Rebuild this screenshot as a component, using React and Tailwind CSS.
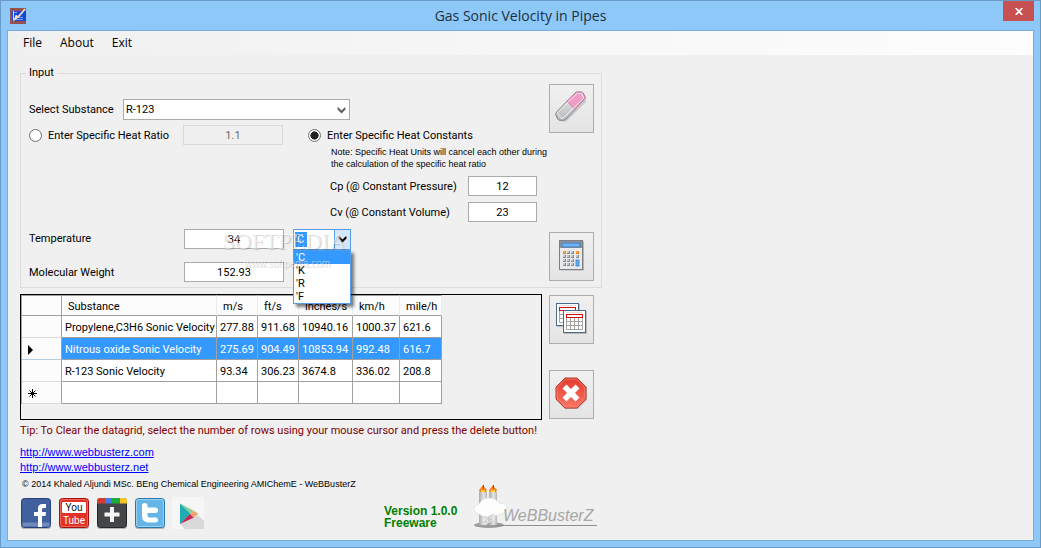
import { useState } from 'react';
import clsx from 'clsx';

const UNITS = ["'C", "'K", "'R", "'F"];
const COLUMNS = ['Substance', 'm/s', 'ft/s', 'inches/s', 'km/h', 'mile/h'];
const ROWS = [
  ['Propylene,C3H6 Sonic Velocity', '277.88', '911.68', '10940.16', '1000.37', '621.6'],
  ['Nitrous oxide Sonic Velocity', '275.69', '904.49', '10853.94', '992.48', '616.7'],
  ['R-123 Sonic Velocity', '93.34', '306.23', '3674.8', '336.02', '208.8'],
];

function AppIcon() {
  return (
    <svg width="16" height="16" viewBox="0 0 16 16" aria-hidden="true">
      <rect width="16" height="16" fill="#95504f" />
      <rect x="2" y="3" width="14" height="10" fill="#1746d8" />
      <path d="M3 4h4v1H3zM4 11h9v1H4zM7 9h6v1H7z" fill="#7fa2f2" />
      <path d="M3.500 3v9.500" stroke="#e9dfe9" strokeWidth="1" />
      <path d="M15 1 9 8l-4 3 1.500-4" fill="none" stroke="#f3dcc0" strokeWidth="1.800" />
    </svg>
  );
}

function Chevron({ className }) {
  return (
    <svg width="9" height="7" viewBox="0 0 9 7" className={className} aria-hidden="true">
      <path d="M0.500 0.500v2l4 4 4-4v-2l-1 0-3 3-3-3z" fill="currentColor" />
    </svg>
  );
}

function EraserIcon() {
  return (
    <svg width="32" height="32" viewBox="0 0 32 32" aria-hidden="true">
      <defs>
        <linearGradient id="eraserGray" x1="0" y1="0" x2="0" y2="1">
          <stop offset="0" stopColor="#eceeef" />
          <stop offset="1" stopColor="#b6b9bb" />
        </linearGradient>
      </defs>
      <path d="M5 30.500h6L31 11V8L10 29z" fill="#000" opacity=".15" />
      <path d="M20 2q1-1 2.500-1h4q1 0 1.600 1l2 3.500q.6 1.500-.5 2.600L11 28q-1.200 1.300-2.800 1.300H5q-1.500 0-2.200-1.200L1 24.500Q.2 22.500 1.600 21z" fill="url(#eraserGray)" stroke="#7e8284" />
      <path d="m11.700 10.200 8.600-8q.9-.9 2.300-.9h3.700q.9 0 1.400.9l1.900 3.300q.5 1.300-.4 2.200L20 18.200z" fill="#ee9ec4" stroke="#c9769f" strokeWidth=".8" />
      <path d="M2.300 21.800 21 3.300q1-1 2-1h4" fill="none" stroke="#fff" opacity=".65" />
      <path d="M2.300 22 7 28 28.600 7.500 27 2.500" fill="none" stroke="#fff" opacity=".8" strokeWidth=".9" />
    </svg>
  );
}

function CalculatorIcon() {
  const keys = [];
  for (let r = 0; r < 4; r++) {
    for (let c = 0; c < 4; c++) {
      if (c === 3 && r > 1) continue;
      keys.push({ x: 8 + c * 4 + (c === 3 ? 1 : 0), y: 12 + r * 4, orange: r === 0 && (c === 0 || c === 3) });
    }
  }
  return (
    <svg width="32" height="32" viewBox="0 0 32 32" aria-hidden="true">
      <rect x="5" y="2" width="24" height="29.500" rx="1" fill="#000" opacity=".22" />
      <rect x="4.500" y="1.500" width="23" height="29" fill="#e8eaec" stroke="#7b7f83" />
      <rect x="5" y="2" width="22" height="7" fill="#8b9299" />
      <rect x="7" y="4" width="18" height="4" fill="#6cb1f3" stroke="#3f76b3" strokeWidth=".8" />
      {keys.map(k => (
        <g key={`${k.x}-${k.y}`}>
          <rect x={k.x} y={k.y} width="3" height="3" fill={k.orange ? '#f58220' : '#85898c'} />
          <rect x={k.x} y={k.y} width="2" height="2" fill={k.orange ? '#fb9b45' : '#c6c9cb'} />
        </g>
      ))}
      <rect x="21" y="21" width="3" height="6" fill="#62aaf0" stroke="#4a90d9" />
    </svg>
  );
}

function Sheet({ x, y }) {
  return (
    <g transform={`translate(${x} ${y})`}>
      <rect x="1" y="1" width="23" height="23" fill="#000" opacity=".2" />
      <rect x=".5" y=".5" width="22" height="22" fill="#fff" stroke="#496a8d" />
      <path d="M3 2.500h17" stroke="#dfe3e6" />
      <path d="M3.500 8v11.500h16V8M7.500 8v11.500M11.500 8v11.500M15.500 8v11.500M3.500 11.500h16M3.500 15.500h16" fill="none" stroke="#a3a3a3" />
      <rect x="3.500" y="4.500" width="16" height="3" fill="#fff" stroke="#cf1010" />
    </g>
  );
}

function SheetsIcon() {
  return (
    <svg width="32" height="32" viewBox="0 0 32 32" aria-hidden="true">
      <Sheet x={1} y={1} />
      <Sheet x={8} y={8} />
    </svg>
  );
}

function CloseIcon() {
  return (
    <svg width="32" height="32" viewBox="0 0 32 32" aria-hidden="true">
      <defs>
        <linearGradient id="stopRed" x1="0" y1="0" x2="0" y2="1">
          <stop offset="0" stopColor="#e23a2e" />
          <stop offset="1" stopColor="#fb7565" />
        </linearGradient>
      </defs>
      <path d="M10 2h13l9 9v12l-9 9H10l-9-9V11z" fill="#000" opacity=".2" />
      <path d="M10 1h12l9 9v12l-9 9H10l-9-9V10z" fill="url(#stopRed)" stroke="#b8392c" />
      <path d="M10.400 2.200h11.200l8.200 8.200v11.200l-8.200 8.200H10.400l-8.200-8.200V10.400z" fill="none" stroke="#f58b7e" strokeWidth=".7" />
      <path d="m9.500 9.500 13 13m0-13-13 13" stroke="#fff" strokeWidth="5.500" />
    </svg>
  );
}

function FacebookIcon() {
  return (
    <svg width="32" height="32" viewBox="0 0 32 32" aria-hidden="true">
      <rect x="1" y="2" width="30" height="30" rx="3" fill="#000" opacity=".25" />
      <rect x="1.500" y="1.500" width="29" height="29" rx="3" fill="#41609e" stroke="#24427c" />
      <path d="M2.500 25.500h27v3q0 1-1 1h-25q-1 0-1-1z" fill="#7089ba" />
      <path d="M18 30V19h-4v-4h4v-3.500Q18 7 22.500 7H26v4h-2.500q-1.500 0-1.500 1.500V15h4l-.5 4H22v11z" fill="#fff" />
    </svg>
  );
}

function YouTubeIcon() {
  return (
    <svg width="32" height="32" viewBox="0 0 32 32" aria-hidden="true">
      <rect x="1" y="2" width="30" height="30" rx="3" fill="#000" opacity=".25" />
      <rect x="1.500" y="1.500" width="29" height="29" rx="3" fill="#e23326" stroke="#a3100e" />
      <rect x="2.500" y="2.500" width="27" height="27" rx="2" fill="none" stroke="#f27466" strokeWidth=".8" />
      <rect x="4" y="5" width="24" height="11" rx="1" fill="#fff" />
      <text x="16" y="14" textAnchor="middle" fontSize="10" fill="#111" fontFamily="Roboto, sans-serif">You</text>
      <text x="16" y="27" textAnchor="middle" fontSize="10" fill="#fff" fontFamily="Roboto, sans-serif">Tube</text>
    </svg>
  );
}

function PlusIcon() {
  return (
    <svg width="32" height="32" viewBox="0 0 32 32" aria-hidden="true">
      <rect x="1" y="2" width="30" height="30" rx="3" fill="#000" opacity=".25" />
      <rect x="1.500" y="1.500" width="29" height="29" rx="3" fill="#454648" stroke="#262728" />
      <path d="M4 1h5v5.500H1V4q0-3 3-3z" fill="#d63a2e" />
      <path d="M9 1h7v5.500H9z" fill="#3f7de8" />
      <path d="M16 1h8v5.500h-8z" fill="#1faa3c" />
      <path d="M24 1h4q3 0 3 3v2.500h-7z" fill="#f7c325" />
      <path d="M14 10h4v5.500h5.500v4H18V25h-4v-5.500H8.500v-4H14z" fill="#f4f4f4" />
    </svg>
  );
}

function TwitterIcon() {
  return (
    <svg width="32" height="32" viewBox="0 0 32 32" aria-hidden="true">
      <rect x="1" y="2" width="30" height="30" rx="3" fill="#000" opacity=".25" />
      <rect x="1.500" y="1.500" width="29" height="29" rx="3" fill="#67b5e6" stroke="#2577ad" />
      <rect x="2.500" y="2.500" width="27" height="27" rx="2" fill="none" stroke="#a7d8f5" strokeWidth=".8" />
      <path d="M8 8.500Q8 6 10.700 6t2.800 2.500V10.500h8q2.500 0 2.500 2.700t-2.500 2.800h-8v2.500q0 2 2 2h6q2.500 0 2.500 2.500t-2.500 2.500H15q-7 0-7-7z" fill="#fff" />
    </svg>
  );
}

function PlayIcon() {
  return (
    <svg width="32" height="32" viewBox="0 0 32 32" aria-hidden="true">
      <rect width="32" height="32" fill="#f6f6f6" />
      <path d="m8 27 18-9 6 6v8H13z" fill="#d9d9d9" />
      <path d="m8 6.500 13.500 7L18 17z" fill="#8ccf9f" />
      <path d="M8 6.500v20.500L18.500 17z" fill="#20aab2" />
      <path d="m8 27 10-10 4 3.500z" fill="#c9244e" />
      <path d="m21.500 13.500 5 3.500-5 3.500-3.500-3.500z" fill="#f3a66c" />
    </svg>
  );
}

function WebbusterzLogo() {
  return (
    <svg width="124" height="46" viewBox="0 0 124 46" role="img" aria-label="WeBBusterZ">
      <defs>
        <linearGradient id="chimney" x1="0" x2="1">
          <stop offset="0" stopColor="#aaaaaa" />
          <stop offset=".6" stopColor="#e6e6e6" />
          <stop offset="1" stopColor="#b4b4b4" />
        </linearGradient>
      </defs>
      <ellipse cx="15" cy="42" rx="15" ry="3" fill="#9c9c9c" />
      <path d="M20 42.500h103" stroke="#8f8f8f" />
      <path d="M5 9h8v33H5z" fill="url(#chimney)" />
      <path d="M15 9h8v33h-8z" fill="url(#chimney)" />
      <path d="M6 9q-2-2 .5-3.500L9 2l2 3q3 1 1 4z" fill="#f47b20" />
      <path d="M16 9q-2-2 .5-3.500L19 2l2 3q3 1 1 4z" fill="#f47b20" />
      <path d="M7 9V6.500l2 1 2-1V9zM17 9V6.500l2 1 2-1V9z" fill="#ffd93d" />
      <path d="M9.500 2v3.500M19.500 2v3.500" stroke="#c43a1c" />
      <path d="M5 31q-5-1-5-5t6-6q2-5 9-5t10 5q8 0 8 5t-7 6q-3 3-8 1-7 4-13-1z" fill="#fdfdfd" stroke="#d6d6d6" strokeWidth=".6" />
      <path d="m18 31-9 6h5l-3 5 10-7h-5l5-4z" fill="#c9c9c9" stroke="#f6f6f6" strokeWidth=".8" />
      <text x="29" y="38" fontSize="16" fill="#a6a6a6" fontFamily="Liberation Sans, sans-serif" fontStyle="italic">WeBBusterZ</text>
    </svg>
  );
}

function ToolButton({ label, children }) {
  return (
    <button type="button" aria-label={label} className="flex h-[49px] w-[45px] shrink-0 items-center justify-center border border-[#adadad] bg-linear-to-b from-[#f0f0f0] to-[#e4e4e4] pr-px pb-1">
      {children}
    </button>
  );
}

function Radio({ checked, onChange, children }) {
  return (
    <label className="flex items-center gap-[6px]">
      <input type="radio" name="heatMode" checked={checked} onChange={onChange}
        className="size-[13px] appearance-none rounded-full border border-[#707070] bg-white checked:bg-radial checked:from-[#222222] checked:from-50% checked:to-white checked:to-55%" />
      <span>{children}</span>
    </label>
  );
}

const FIELD = 'h-5 border border-[#ababab] bg-white px-1 text-center outline-none';

function HeatInputs() {
  const [mode, setMode] = useState('constants');
  return (
    <>
      <div className="mt-[5px] flex h-5 items-center">
        <div className="w-[154px]">
          <Radio checked={mode === 'ratio'} onChange={() => setMode('ratio')}>Enter Specific Heat Ratio</Radio>
        </div>
        <input aria-label="Specific heat ratio" defaultValue="1.1" disabled={mode !== 'ratio'}
          className="mr-[25px] h-5 w-[100px] border border-[#d9d9d9] bg-[#f0f0f0] text-center text-[#6d6d6d]" />
        <Radio checked={mode === 'constants'} onChange={() => setMode('constants')}>Enter Specific Heat Constants</Radio>
      </div>
      <p className="mt-px pl-[302px] font-['Liberation_Sans',Arial,sans-serif] text-[9px] leading-3 whitespace-nowrap">
        Note: Specific Heat Units will cancel each other during<br />
        the calculation of the specific heat ratio
      </p>
      <div className="mt-[6px] flex items-center pl-[301px]">
        <label htmlFor="cp" className="w-[138px]">Cp (@ Constant Pressure)</label>
        <input id="cp" defaultValue="12" className={clsx(FIELD, 'w-[69px]')} />
      </div>
      <div className="mt-[6px] flex items-center pl-[301px]">
        <label htmlFor="cv" className="w-[138px]">Cv (@ Constant Volume)</label>
        <input id="cv" defaultValue="23" className={clsx(FIELD, 'w-[69px]')} />
      </div>
    </>
  );
}

function UnitCombo() {
  const [unit, setUnit] = useState("'C");
  const [open, setOpen] = useState(true);
  return (
    <div className="relative ml-[9px] flex h-[21px] w-[58px] border border-[#569de5] bg-white">
      <div className="flex flex-1 items-center pl-px">
        <input aria-label="Temperature unit" role="combobox" aria-expanded={open} aria-controls="unit-list" value={unit} readOnly
          className="h-[15px] w-3 bg-[#3399ff] text-white outline-none" />
      </div>
      <button type="button" aria-label="Show units" onClick={() => setOpen(!open)}
        className="flex w-4 items-center justify-center border-l border-[#569de5] bg-[#d3e7fb] text-black">
        <Chevron />
      </button>
      {open && (
        <ul id="unit-list" role="listbox" className="absolute top-5 -left-px z-10 w-[58px] border border-[#569de5] bg-white shadow-[3px_3px_3px_rgba(0,0,0,0.5)]">
          {UNITS.map(u => (
            <li key={u} role="option" aria-selected={u === unit} onClick={() => { setUnit(u); setOpen(false); }}
              className={clsx('h-[13px] pl-[2px] leading-[13px]', u === unit && 'bg-[#3399ff] text-white')}>
              {u}
            </li>
          ))}
        </ul>
      )}
      <div aria-hidden="true" className="pointer-events-none absolute top-0 -left-[72px] z-20 text-white/50 [text-shadow:1px_1px_1px_rgba(0,0,0,0.18)]">
        <p className="font-['Liberation_Serif',serif] text-[23px] leading-6">SOFTPEDIA</p>
        <p className="pl-[22px] font-['Liberation_Sans',Arial,sans-serif] text-[10px] leading-5">www.softpedia.com</p>
      </div>
    </div>
  );
}

function InputGroup() {
  return (
    <fieldset className="flex border border-[#dcdcdc] pr-[7px] pb-[5px] pl-[5px]">
      <legend className="px-[3px] leading-[14px]">Input</legend>
      <div className="flex-1 pl-[3px]">
        <div className="mt-[19px] flex items-center">
          <label htmlFor="substance" className="w-[94px]">Select Substance</label>
          <div className="relative">
            <select id="substance" className="h-[21px] w-[227px] appearance-none border border-[#ababab] bg-white px-[2px] outline-none">
              <option>R-123</option>
              <option>Nitrous oxide</option>
              <option>Propylene,C3H6</option>
            </select>
            <Chevron className="pointer-events-none absolute top-2 right-1 text-[#606060]" />
          </div>
        </div>
        <HeatInputs />
        <div className="mt-[7px] flex items-start">
          <label htmlFor="temperature" className="w-[155px] leading-5">Temperature</label>
          <input id="temperature" defaultValue="34" className={clsx(FIELD, 'w-[100px]')} />
          <UnitCombo />
        </div>
        <div className="mt-3 flex items-center">
          <label htmlFor="weight" className="w-[155px]">Molecular Weight</label>
          <input id="weight" defaultValue="152.93" className={clsx(FIELD, 'w-[100px]')} />
        </div>
      </div>
      <div className="flex flex-col justify-between pt-1 pb-px">
        <ToolButton label="Clear"><EraserIcon /></ToolButton>
        <ToolButton label="Calculate"><CalculatorIcon /></ToolButton>
      </div>
    </fieldset>
  );
}

function RowHeader({ selected, children }) {
  return (
    <th scope="row" className={clsx('border-r border-b border-r-[#a0a0a0] bg-[#fcfcfc] pt-[2px] pl-[6px]', selected ? 'border-b-[#b5cde3]' : 'border-b-[#dcdcdc]')}>
      {children}
    </th>
  );
}

function ResultGrid() {
  const [selected, setSelected] = useState(1);
  return (
    <div className="flex-1 border border-black pb-[15px]">
      <table className="w-[421px] table-fixed border-separate border-spacing-0 border-l border-[#a0a0a0] text-left">
        <colgroup>
          <col className="w-[40px]" />
          <col className="w-[155px]" />
          <col className="w-[41px]" />
          <col className="w-[41px]" />
          <col className="w-[54px]" />
          <col className="w-[47px]" />
          <col className="w-[42px]" />
        </colgroup>
        <thead>
          <tr className="h-[21px] bg-[#fcfcfc]">
            <td className="border-t border-r border-b border-[#a0a0a0]" />
            {COLUMNS.map(c => (
              <th key={c} scope="col" className="border-t border-r border-b border-[#a0a0a0] border-r-[#e5edf5] pt-[2px] pl-[6px] font-normal">{c}</th>
            ))}
          </tr>
        </thead>
        <tbody>
          {ROWS.map((row, i) => (
            <tr key={row[0]} onClick={() => setSelected(i)} className={clsx('h-[22px]', i === selected ? 'bg-[#3399ff] text-white' : 'bg-white')}>
              <RowHeader selected={i === selected}>
                {i === selected && (
                  <svg width="6" height="10" viewBox="0 0 6 10" role="img" aria-label="Current row">
                    <path d="M0 0v10l5-5z" fill="#000" />
                  </svg>
                )}
              </RowHeader>
              {row.map((cell, j) => (
                <td key={j} className="border-r border-b border-[#a0a0a0] pt-[2px] pl-[3px] whitespace-nowrap">{cell}</td>
              ))}
            </tr>
          ))}
          <tr className="h-[22px] bg-white">
            <RowHeader>
              <svg width="9" height="9" viewBox="0 0 9 9" role="img" aria-label="New row">
                <path d="M4.500 0v9M0 4.500h9M1.500 1.500l6 6M7.500 1.500l-6 6" stroke="#000" />
              </svg>
            </RowHeader>
            {COLUMNS.map(c => <td key={c} className="border-r border-b border-[#a0a0a0]" />)}
          </tr>
        </tbody>
      </table>
    </div>
  );
}

function Footer() {
  return (
    <footer className="mt-[6px] flex items-end font-['Liberation_Sans',Arial,sans-serif]">
      <div className="w-[364px]">
        <a href="http://www.webbusterz.com" className="block w-fit leading-[15px] text-[#0000ff] underline">http://www.webbusterz.com</a>
        <a href="http://www.webbusterz.net" className="block w-fit leading-[15px] text-[#0000ff] underline">http://www.webbusterz.net</a>
        <p className="mt-[3px] pl-[2px] text-[9px] leading-3 whitespace-nowrap">© 2014 Khaled Aljundi MSc. BEng Chemical Engineering AMIChemE - WeBBusterZ</p>
        <div className="mt-[7px] flex gap-[6px]">
          <a href="#facebook" aria-label="Facebook"><FacebookIcon /></a>
          <a href="#youtube" aria-label="YouTube"><YouTubeIcon /></a>
          <a href="#googleplus" aria-label="Google Plus"><PlusIcon /></a>
          <a href="#twitter" aria-label="Twitter"><TwitterIcon /></a>
          <a href="#play" aria-label="Google Play"><PlayIcon /></a>
        </div>
      </div>
      <p className="w-[90px] text-xs leading-3 font-bold text-[#008000]">Version 1.0.0<br />Freeware</p>
      <WebbusterzLogo />
    </footer>
  );
}

export default function App() {
  return (
    <div className="flex min-h-screen flex-col border border-[#6a9bc6] bg-[#8dc8f9] px-[6px] pb-[6px] font-[Roboto,'Liberation_Sans',sans-serif] text-[11px] leading-[17px] text-black">
      <header className="flex h-[29px] items-center pl-[3px]">
        <AppIcon />
        <h1 className="flex-1 pl-3 text-center font-['Open_Sans','Noto_Sans',sans-serif] text-[14px] text-[#1e2f3d]">Gas Sonic Velocity in Pipes</h1>
        <button type="button" aria-label="Close" className="flex h-5 w-[31px] items-center justify-center self-start bg-[#c75050]">
          <svg width="8" height="7" viewBox="0 0 8 7" aria-hidden="true">
            <path d="m.7 0 6.600 7M7.300 0 .7 7" stroke="#fff" strokeWidth="1.700" />
          </svg>
        </button>
      </header>
      <div className="flex flex-1 flex-col border border-[#78acd9] bg-[#f0f0f0]">
        <nav className="flex h-6 items-center gap-[18px] bg-linear-to-r from-[#f0f0f0] to-[#fdfdfd] pl-[15px] font-['Open_Sans','Noto_Sans',sans-serif] text-xs">
          <button type="button">File</button>
          <button type="button">About</button>
          <button type="button">Exit</button>
        </nav>
        <main className="w-full max-w-[594px] pt-[11px] pb-[10px] pl-3">
          <InputGroup />
          <div className="mt-[6px] flex gap-[7px] pr-2">
            <ResultGrid />
            <div className="flex flex-col justify-between py-px">
              <ToolButton label="Copy results"><SheetsIcon /></ToolButton>
              <ToolButton label="Exit"><CloseIcon /></ToolButton>
            </div>
          </div>
          <p className="mt-[3px] leading-4 text-[#800000]">Tip: To Clear the datagrid, select the number of rows using your mouse cursor and press the delete button!</p>
          <Footer />
        </main>
      </div>
    </div>
  );
}
